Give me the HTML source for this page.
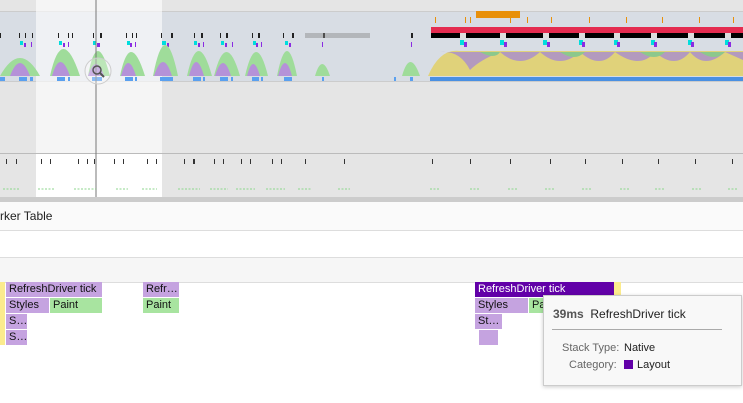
<html><head><style>
body{margin:0;width:743px;height:403px;overflow:hidden;font-family:"Liberation Sans",sans-serif;background:#fff;position:relative}
.a{position:absolute}
.f{position:absolute;height:15px;font-size:11px;line-height:15px;padding-left:3px;box-sizing:border-box;overflow:hidden;white-space:nowrap;color:#111}
.p{background:#c5a3e0}.g{background:#a8e4a0}
</style></head><body>
<div class="a" style="left:0;top:0;width:743px;height:153px;background:#e5e5e5"></div>
<div class="a" style="left:0;top:11px;width:743px;height:71px;background:#d8dde4;border-top:1px solid #ccc;border-bottom:1px solid #ccc;box-sizing:border-box"></div>
<div class="a" style="left:36px;top:0;width:126px;height:153px;background:rgba(255,255,255,0.6)"></div>
<div class="a" style="left:0;top:153px;width:743px;height:44px;background:#e5e5e5;border-top:1px solid #bbb"></div>
<div class="a" style="left:36px;top:154px;width:126px;height:43px;background:#fff"></div>
<div class="a" style="left:0;top:197px;width:743px;height:5px;background:#ccc"></div>
<svg class="a" style="left:0;top:0" width="743" height="200">
<g fill="#222">
<rect x="0" y="33" width="1" height="5"/><rect x="19" y="33" width="1" height="5"/><rect x="25" y="33" width="1" height="5"/><rect x="32" y="33" width="1" height="5"/>
<rect x="58" y="33" width="1" height="5"/><rect x="68" y="33" width="1" height="5"/><rect x="72" y="33" width="1" height="5"/>
<rect x="93" y="33" width="1" height="5"/><rect x="100" y="33" width="2" height="5"/>
<rect x="126" y="33" width="1" height="5"/><rect x="132" y="33" width="1" height="5"/><rect x="136" y="33" width="1" height="5"/>
<rect x="161" y="33" width="1" height="5"/><rect x="171" y="33" width="2" height="5"/>
<rect x="194" y="33" width="1" height="5"/><rect x="201" y="33" width="2" height="5"/>
<rect x="220" y="33" width="1" height="5"/><rect x="226" y="33" width="2" height="5"/>
<rect x="252" y="33" width="1" height="5"/><rect x="258" y="33" width="2" height="5"/>
<rect x="283" y="33" width="1" height="5"/><rect x="292" y="33" width="2" height="5"/>
<rect x="323" y="33" width="2" height="5"/>
<rect x="305" y="33" width="65" height="5" fill="#888" opacity=".45"/>
<rect x="411" y="33" width="2" height="5"/>
</g>
<g fill="#0dd"><rect x="20" y="41" width="3" height="4"/><rect x="59" y="41" width="3" height="4"/><rect x="93" y="41" width="3" height="4"/><rect x="127" y="41" width="3" height="4"/><rect x="162" y="41" width="4" height="4"/><rect x="194" y="41" width="3" height="4"/><rect x="221" y="41" width="3" height="4"/><rect x="253" y="41" width="3" height="4"/><rect x="285" y="41" width="3" height="4"/>
<rect x="460" y="40" width="4" height="5"/><rect x="500" y="40" width="4" height="5"/><rect x="543" y="40" width="4" height="5"/><rect x="579" y="40" width="4" height="5"/><rect x="614" y="40" width="4" height="5"/><rect x="651" y="40" width="4" height="5"/><rect x="688" y="40" width="4" height="5"/><rect x="725" y="40" width="4" height="5"/></g>
<g fill="#8a2be2"><rect x="24" y="43" width="2" height="4"/><rect x="31" y="42" width="1" height="5"/><rect x="63" y="43" width="2" height="4"/><rect x="68" y="42" width="1" height="5"/><rect x="97" y="43" width="3" height="4"/><rect x="130" y="43" width="2" height="4"/><rect x="135" y="42" width="1" height="5"/><rect x="167" y="43" width="2" height="4"/><rect x="198" y="43" width="2" height="4"/><rect x="203" y="42" width="1" height="5"/><rect x="225" y="43" width="2" height="4"/><rect x="232" y="42" width="1" height="5"/><rect x="256" y="43" width="2" height="4"/><rect x="261" y="42" width="1" height="5"/><rect x="289" y="43" width="2" height="4"/><rect x="322" y="42" width="1" height="5"/><rect x="411" y="42" width="1" height="5"/>
<rect x="464" y="42" width="3" height="5"/><rect x="504" y="42" width="3" height="5"/><rect x="547" y="42" width="3" height="5"/><rect x="582" y="42" width="3" height="5"/><rect x="617" y="42" width="3" height="5"/><rect x="654" y="42" width="3" height="5"/><rect x="691" y="42" width="3" height="5"/><rect x="728" y="42" width="3" height="5"/></g>
<g>
<path d="M0 76 Q20 40 40 76Z" fill="#9fdc9a"/><path d="M10 76 Q20 50 30 76Z" fill="#b592d8"/>
<path d="M50 76 Q62 22 80 76Z" fill="#9fdc9a"/><path d="M52 76 Q60 48 70 76Z" fill="#b592d8"/>
<path d="M88 76 Q97 26 110 76Z" fill="#9fdc9a"/><path d="M88 76 Q96 52 104 76Z" fill="#b592d8"/>
<path d="M120 76 Q130 28 145 76Z" fill="#9fdc9a"/><path d="M121 76 Q128 50 136 76Z" fill="#b592d8"/>
<path d="M153 76 Q165 14 178 76Z" fill="#9fdc9a"/><path d="M154 76 Q163 48 172 76Z" fill="#b592d8"/>
<path d="M187 76 Q198 26 212 76Z" fill="#9fdc9a"/><path d="M189 76 Q196 48 204 76Z" fill="#b592d8"/>
<path d="M214 76 Q226 28 240 76Z" fill="#9fdc9a"/><path d="M215 76 Q223 50 231 76Z" fill="#b592d8"/>
<path d="M245 76 Q256 28 268 76Z" fill="#9fdc9a"/><path d="M247 76 Q253 52 260 76Z" fill="#b592d8"/>
<path d="M277 76 Q287 26 297 76Z" fill="#9fdc9a"/><path d="M278 76 Q285 50 292 76Z" fill="#b592d8"/>
<path d="M315 76 Q322 52 330 76Z" fill="#9fdc9a"/>
<path d="M402 76 Q410 48 420 76Z" fill="#9fdc9a"/>
</g>
<g fill="#5aa0ef"><rect x="0" y="77" width="5" height="4"/><rect x="19" y="77" width="8" height="4"/><rect x="30" y="77" width="3" height="4"/><rect x="57" y="77" width="8" height="4"/><rect x="68" y="77" width="2" height="4"/><rect x="92" y="77" width="10" height="4"/><rect x="125" y="77" width="8" height="4"/><rect x="135" y="77" width="2" height="4"/><rect x="160" y="77" width="13" height="4"/><rect x="193" y="77" width="8" height="4"/><rect x="203" y="77" width="2" height="4"/><rect x="220" y="77" width="8" height="4"/><rect x="231" y="77" width="2" height="4"/><rect x="252" y="77" width="7" height="4"/><rect x="261" y="77" width="2" height="4"/><rect x="284" y="77" width="8" height="4"/><rect x="322" y="77" width="2" height="4"/><rect x="394" y="77" width="2" height="4"/><rect x="410" y="77" width="3" height="4"/><rect x="430" y="77" width="313" height="4" fill="#4a90e2"/></g>
<rect x="476" y="11" width="44" height="7" fill="#e8900a"/>
<g fill="#e8900a"><rect x="435" y="17" width="1" height="6"/><rect x="465" y="17" width="1" height="6"/><rect x="470" y="17" width="1" height="6"/><rect x="510" y="17" width="1" height="6"/><rect x="527" y="17" width="1" height="6"/><rect x="551" y="17" width="1" height="6"/><rect x="589" y="17" width="1" height="6"/><rect x="626" y="17" width="1" height="6"/><rect x="662" y="17" width="1" height="6"/><rect x="699" y="17" width="1" height="6"/><rect x="733" y="17" width="1" height="6"/></g>
<rect x="431" y="27" width="312" height="6" fill="#e42c50"/>
<rect x="431" y="33" width="312" height="5" fill="#000"/>
<g fill="#ddd"><rect x="460" y="33" width="6" height="5"/><rect x="500" y="33" width="6" height="5"/><rect x="543" y="33" width="6" height="5"/><rect x="579" y="33" width="6" height="5"/><rect x="614" y="33" width="6" height="5"/><rect x="651" y="33" width="6" height="5"/><rect x="688" y="33" width="6" height="5"/><rect x="725" y="33" width="6" height="5"/></g>
<path d="M428 76 Q440 48 460 51 L743 51 L743 76Z" fill="#e0d27a"/>
<path d="M440 52 Q460 50 470 70 Q480 60 500 52 Q520 70 540 52 Q560 70 580 52 Q600 70 615 52 Q640 70 655 52 Q675 70 690 52 Q705 70 725 52 L743 60 L743 52Z" fill="#a88cd0" opacity=".8"/>
<path d="M480 52 Q495 60 500 52Z M560 52 Q575 62 585 52Z M640 52 Q655 62 665 52Z M700 52 Q715 62 725 52Z" fill="#8cc88c"/>
<line x1="96" y1="0" x2="96" y2="197" stroke="#777" stroke-width="1"/>
<circle cx="98" cy="71" r="13" fill="rgba(255,255,255,.3)" stroke="#ccc"/>
<circle cx="97" cy="70" r="4" fill="none" stroke="#555" stroke-width="1.5"/><line x1="100" y1="73" x2="104" y2="77" stroke="#555" stroke-width="2"/>
<g fill="#333"><rect x="6" y="159" width="1" height="5"/><rect x="16" y="159" width="1" height="5"/><rect x="41" y="159" width="1" height="5"/><rect x="50" y="159" width="1" height="5"/><rect x="78" y="159" width="1" height="5"/><rect x="87" y="159" width="1" height="5"/><rect x="94" y="159" width="1" height="5"/><rect x="114" y="159" width="1" height="5"/><rect x="123" y="159" width="1" height="5"/><rect x="147" y="159" width="1" height="5"/><rect x="156" y="159" width="1" height="5"/><rect x="184" y="159" width="1" height="5"/><rect x="193" y="159" width="2" height="5"/><rect x="214" y="159" width="1" height="5"/><rect x="223" y="159" width="1" height="5"/><rect x="241" y="159" width="1" height="5"/><rect x="250" y="159" width="1" height="5"/><rect x="272" y="159" width="1" height="5"/><rect x="281" y="159" width="1" height="5"/><rect x="305" y="159" width="1" height="5"/><rect x="344" y="159" width="1" height="5"/><rect x="432" y="159" width="1" height="5"/><rect x="470" y="159" width="1" height="5"/><rect x="510" y="159" width="1" height="5"/><rect x="550" y="159" width="1" height="5"/><rect x="585" y="159" width="1" height="5"/><rect x="622" y="159" width="1" height="5"/><rect x="658" y="159" width="1" height="5"/><rect x="695" y="159" width="1" height="5"/><rect x="732" y="159" width="1" height="5"/></g>
<g stroke="#8cd68c" stroke-dasharray="2 1.5"><line x1="3" y1="189" x2="20" y2="189"/><line x1="38" y1="189" x2="54" y2="189"/><line x1="74" y1="189" x2="96" y2="189"/><line x1="116" y1="189" x2="128" y2="189"/><line x1="142" y1="189" x2="157" y2="189"/><line x1="178" y1="189" x2="200" y2="189"/><line x1="210" y1="189" x2="228" y2="189"/><line x1="236" y1="189" x2="255" y2="189"/><line x1="266" y1="189" x2="285" y2="189"/><line x1="298" y1="189" x2="312" y2="189"/><line x1="338" y1="189" x2="350" y2="189"/><line x1="430" y1="189" x2="440" y2="189"/><line x1="470" y1="189" x2="480" y2="189"/><line x1="508" y1="189" x2="518" y2="189"/><line x1="545" y1="189" x2="555" y2="189"/><line x1="582" y1="189" x2="592" y2="189"/><line x1="620" y1="189" x2="630" y2="189"/><line x1="655" y1="189" x2="665" y2="189"/><line x1="692" y1="189" x2="702" y2="189"/><line x1="728" y1="189" x2="738" y2="189"/></g>
</svg>
<div class="a" style="left:0;top:202px;width:743px;height:28px;background:#fafafa;border-bottom:1px solid #ddd;font-size:12px;line-height:28px;color:#222">rker Table</div>
<div class="a" style="left:0;top:257px;width:743px;height:24px;background:#f6f6f6;border-top:1px solid #ddd;border-bottom:1px solid #ddd"></div>
<div class="f" style="left:0;top:282px;width:5px;height:63px;background:#fbeb8e"></div>
<div class="f p" style="left:6px;top:282px;width:96px">RefreshDriver tick</div>
<div class="f p" style="left:6px;top:298px;width:43px">Styles</div>
<div class="f g" style="left:50px;top:298px;width:52px">Paint</div>
<div class="f p" style="left:6px;top:314px;width:21px">S…</div>
<div class="f p" style="left:6px;top:330px;width:21px">S…</div>
<div class="f p" style="left:143px;top:282px;width:36px">Refr…</div>
<div class="f g" style="left:143px;top:298px;width:36px">Paint</div>
<div class="f" style="left:475px;top:282px;width:139px;background:#6200a8;color:#fff">RefreshDriver tick</div>
<div class="f" style="left:614px;top:282px;width:7px;background:#fbeb8e"></div>
<div class="f p" style="left:475px;top:298px;width:53px">Styles</div>
<div class="f g" style="left:529px;top:298px;width:20px">Pa</div>
<div class="f p" style="left:475px;top:314px;width:27px">St…</div>
<div class="f p" style="left:479px;top:330px;width:19px"></div>
<div class="a" style="left:543px;top:295px;width:199px;height:91px;background:#f8f8f8;border:1px solid #ccc;box-sizing:border-box;box-shadow:0 1px 4px rgba(0,0,0,.2);font-size:11px;color:#222">
<div class="a" style="left:9px;top:11px;font-size:12px"><b style="color:#555">39ms</b>&nbsp; RefreshDriver tick</div>
<div class="a" style="left:8px;top:33px;width:170px;border-top:1px solid #aaa"></div>
<div class="a" style="left:18px;top:46px;color:#666">Stack Type:</div><div class="a" style="left:80px;top:46px">Native</div>
<div class="a" style="left:25px;top:63px;color:#666">Category:</div><div class="a" style="left:80px;top:64px;width:9px;height:9px;background:#6200a8"></div><div class="a" style="left:93px;top:63px">Layout</div>
</div>
</body></html>
